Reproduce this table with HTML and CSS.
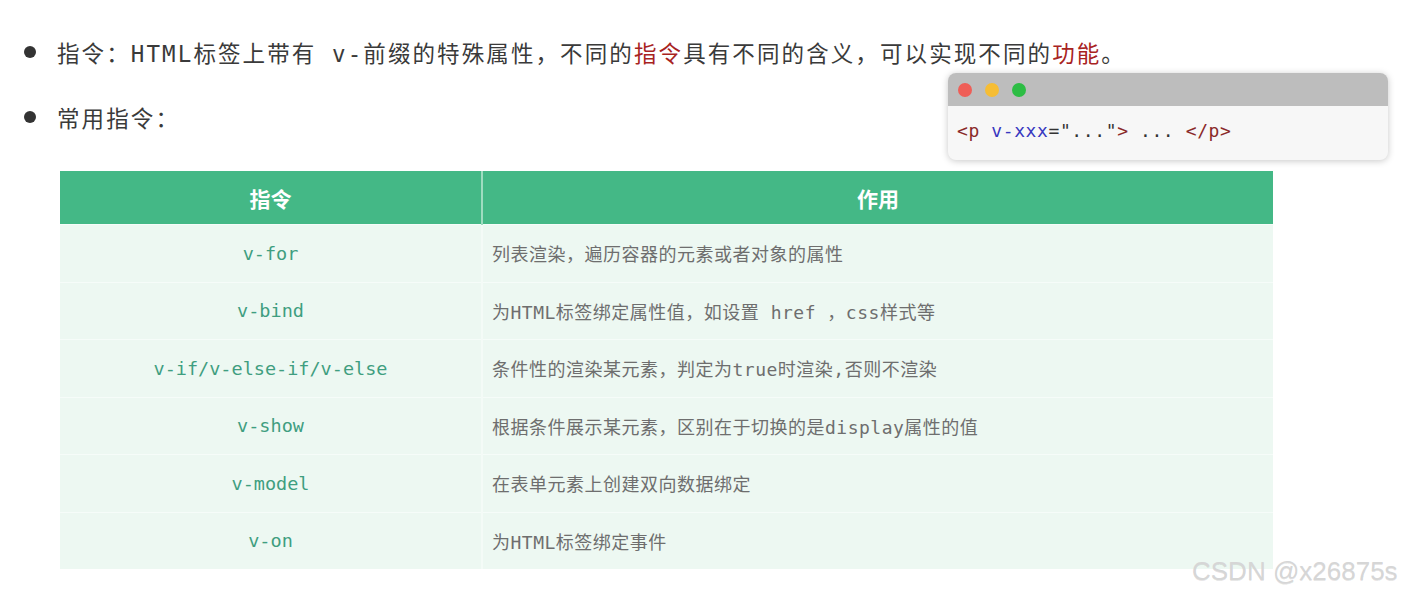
FILE: index.html
```html
<!DOCTYPE html>
<html lang="zh">
<head>
<meta charset="utf-8">
<link rel="stylesheet" href="styles.css">
</head>
<body>
<div class="page">
  <div class="bullet-line first">
    <span class="dot"></span>
    <span class="btext">指令：HTML标签上带有 v-前缀的特殊属性，不同的<span class="hl">指令</span>具有不同的含义，可以实现不同的<span class="hl">功能</span>。</span>
  </div>
  <div class="row2">
    <div class="bullet-line">
      <span class="dot"></span>
      <span class="btext">常用指令：</span>
    </div>
    <div class="codewin">
      <div class="titlebar">
        <span class="light red"></span>
        <span class="light yellow"></span>
        <span class="light green"></span>
      </div>
      <div class="codebody"><span class="tag">&lt;p</span> <span class="attr">v-xxx</span><span class="plain">="..."</span><span class="tag">&gt;</span><span class="plain"> ... </span><span class="tag">&lt;/p&gt;</span></div>
    </div>
  </div>
  <table class="dirs">
    <thead>
      <tr><th class="c1">指令</th><th class="c2">作用</th></tr>
    </thead>
    <tbody>
      <tr><td class="c1">v-for</td><td class="c2">列表渲染，遍历容器的元素或者对象的属性</td></tr>
      <tr><td class="c1">v-bind</td><td class="c2">为HTML标签绑定属性值，如设置 href ，css样式等</td></tr>
      <tr><td class="c1">v-if/v-else-if/v-else</td><td class="c2">条件性的渲染某元素，判定为true时渲染,否则不渲染</td></tr>
      <tr><td class="c1">v-show</td><td class="c2">根据条件展示某元素，区别在于切换的是display属性的值</td></tr>
      <tr><td class="c1">v-model</td><td class="c2">在表单元素上创建双向数据绑定</td></tr>
      <tr><td class="c1">v-on</td><td class="c2">为HTML标签绑定事件</td></tr>
    </tbody>
  </table>
  <div class="watermark">CSDN @x26875s</div>
</div>
</body>
</html>
```
FILE: styles.css
```css
html, body {
  margin: 0;
  padding: 0;
  background: #ffffff;
}
.page {
  position: relative;
  width: 1406px;
  height: 598px;
  overflow: hidden;
  font-family: "DejaVu Sans Mono", "Noto Sans CJK SC", monospace;
  color: #333333;
}
.bullet-line {
  display: flex;
  align-items: center;
  height: 30px;
}
.bullet-line.first {
  margin-top: 37px;
}
.dot {
  width: 12px;
  height: 12px;
  border-radius: 50%;
  background: #333333;
  margin-left: 24px;
  margin-right: 21px;
  flex: none;
}
.btext {
  font-size: 22.5px;
  letter-spacing: 2.1px;
  white-space: nowrap;
  color: #3a3a3a;
}
.hl {
  color: #a8231f;
  font-weight: 400;
}
.row2 {
  display: flex;
  align-items: center;
  justify-content: space-between;
  margin-top: 6px;
}
.codewin {
  width: 440px;
  height: 87px;
  margin-right: 18px;
  border-radius: 8px;
  background: #f7f7f7;
  box-shadow: 0 1px 7px rgba(0,0,0,0.22);
  overflow: hidden;
  display: flex;
  flex-direction: column;
}
.titlebar {
  height: 33px;
  background: #bdbdbd;
  display: flex;
  align-items: center;
  gap: 13px;
  padding-left: 10px;
}
.light {
  width: 14px;
  height: 14px;
  border-radius: 50%;
}
.light.red { background: #ef5e57; }
.light.yellow { background: #f6bd34; }
.light.green { background: #2dbd44; }
.codebody {
  padding-left: 9px;
  padding-top: 14px;
  font-family: "DejaVu Sans Mono", monospace;
  font-size: 18px;
  letter-spacing: 0.6px;
  white-space: pre;
}
.tag { color: #8a2a2a; }
.attr { color: #3838c0; }
.plain { color: #333333; }
.dirs {
  margin-top: 11px;
  margin-left: 60px;
  width: 1213px;
  border-collapse: collapse;
  table-layout: fixed;
}
.dirs th {
  height: 53px;
  background: #44b886;
  color: #ffffff;
  font-family: "Noto Sans CJK SC", sans-serif;
  font-size: 21px;
  font-weight: 700;
  text-align: center;
  padding: 0;
}
.dirs th.c1 {
  width: 421px;
  border-right: 2px solid #9fdcc0;
}
.dirs td {
  height: 56.5px;
  background: #edf8f2;
  border-top: 1px solid #f6fcf9;
  padding: 0;
}
.dirs td.c1 {
  text-align: center;
  font-family: "DejaVu Sans Mono", monospace;
  font-size: 18.5px;
  color: #3f9e80;
  border-right: 2px solid #f4fbf7;
}
.dirs td.c2 {
  padding-left: 9px;
  font-family: "DejaVu Sans Mono", "Noto Sans CJK SC", monospace;
  font-size: 18px;
  letter-spacing: 0.5px;
  color: #6e6e6e;
  white-space: nowrap;
}
.watermark {
  position: absolute;
  left: 1192px;
  top: 556px;
  font-family: "Liberation Sans", Arial, sans-serif;
  font-size: 26px;
  color: #d6d6d6;
  text-shadow: 0 1px 0 rgba(0,0,0,0.1);
  white-space: nowrap;
}
```
